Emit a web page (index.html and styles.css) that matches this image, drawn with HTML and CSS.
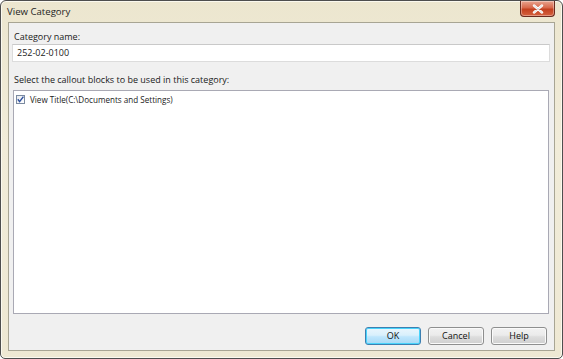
FILE: index.html
```html
<!DOCTYPE html>
<html>
<head>
<meta charset="utf-8">
<link rel="stylesheet" href="styles.css">
</head>
<body>
<div class="window">
  <div class="titlebar">
    <span class="title">View Category</span>
    <div class="close">
      <svg width="12" height="10" viewBox="0 0 12 10"><path d="M2 1.5 L10 8.5 M10 1.5 L2 8.5" stroke="#fff" stroke-width="2.4" stroke-linecap="round"/><path d="M2 1.5 L10 8.5 M10 1.5 L2 8.5" stroke="#9a9a9a" stroke-width="0.6" stroke-linecap="round" opacity="0.6"/></svg>
    </div>
  </div>
  <div class="client">
    <div class="label">Category name:</div>
    <div class="input">252-02-0100</div>
    <div class="label label2">Select the callout blocks to be used in this category:</div>
    <div class="list">
      <div class="item">
        <span class="check"><svg width="9" height="9" viewBox="0 0 9 9"><path d="M1.8 4.3 L3.6 6.6 L7.4 1.6" stroke="#2c4f9e" stroke-width="1.4" fill="none"/></svg></span>
        <span class="itemtext">View Title(C:\Documents and Settings)</span>
      </div>
    </div>
    <div class="buttons">
      <div class="btn default">OK</div>
      <div class="btn">Cancel</div>
      <div class="btn">Help</div>
    </div>
  </div>
</div>
</body>
</html>
```
FILE: styles.css
```css
html, body {
  margin: 0;
  padding: 0;
  background: #ffffff;
}
body {
  width: 563px;
  height: 359px;
  font-family: "Open Sans", "Noto Sans", sans-serif;
  font-size: 9px;
  color: #1a1a1a;
}
.window {
  box-sizing: border-box;
  width: 563px;
  height: 359px;
  border: 1px solid #4e4e4e;
  border-radius: 6px 6px 5px 5px;
  background: linear-gradient(to bottom, #ece6cf 0%, #f1ecd9 40%, #eee8d3 100%);
  padding: 0 7px 7px 7px;
  display: flex;
  flex-direction: column;
  box-shadow: inset 0 0 0 1px #fbf9ef;
}
.titlebar {
  height: 21px;
  display: flex;
  align-items: flex-start;
}
.title {
  font-size: 9.6px;
  color: #1e1e1e;
  margin-left: -1px;
  margin-top: 4px;
}
.close {
  margin-left: auto;
  margin-top: 0;
  width: 35px;
  height: 16px;
  box-sizing: border-box;
  border: 1px solid #6a2a1e;
  border-top: none;
  border-radius: 0 0 4px 4px;
  background: linear-gradient(to bottom, #e9a48f 0%, #d7684b 45%, #c3401f 55%, #d5623f 100%);
  display: flex;
  align-items: center;
  justify-content: center;
  box-shadow: inset 0 0 0 1px rgba(255,255,255,0.35);
}
.client {
  flex: 1;
  background: #f0f0f0;
  border: 1px solid #a8a594;
  padding: 7px 4px 0 4px;
  display: flex;
  flex-direction: column;
}
.label {
  line-height: 13px;
  height: 13px;
  padding-left: 1px;
}
.input {
  margin-top: 1px;
  margin-left: -1px;
  margin-right: 0;
  height: 18px;
  box-sizing: border-box;
  border: 1px solid #dcdcdc;
  border-top-color: #c9c9c9;
  background: #ffffff;
  padding: 0 0 0 4px;
  line-height: 16px;
}
.label2 {
  margin-top: 11px;
}
.list {
  margin-top: 4px;
  margin-right: 1px;
  height: 224px;
  box-sizing: border-box;
  border: 1px solid #a9a9b4;
  background: #ffffff;
  padding: 3px 2px;
}
.item {
  display: flex;
  align-items: center;
  height: 11px;
  line-height: 11px;
}
.itemtext {
  font-size: 8.1px;
}
.check {
  width: 9px;
  height: 9px;
  box-sizing: border-box;
  border: 1px solid #7b8aa0;
  background: linear-gradient(135deg, #e6e9ee, #ffffff);
  margin-right: 5px;
  position: relative;
}
.check svg {
  position: absolute;
  left: -1px;
  top: -1px;
}
.buttons {
  margin-top: 13px;
  display: flex;
  justify-content: flex-end;
  gap: 7px;
  padding-right: 3px;
}
.btn {
  width: 56px;
  height: 18px;
  box-sizing: border-box;
  border: 1px solid #8e8f8f;
  border-radius: 3px;
  background: linear-gradient(to bottom, #f2f2f2 0%, #ebebeb 45%, #dddddd 55%, #cfcfcf 100%);
  box-shadow: inset 0 0 0 1px #fafafa;
  text-align: center;
  line-height: 16px;
  color: #111;
}
.btn.default {
  border-color: #3c7fb1;
  box-shadow: inset 0 0 0 1px #48d3fb;
  background: linear-gradient(to bottom, #eaf6fd 0%, #d9f0fc 45%, #bee6fd 55%, #a7d9f5 100%);
}
```
